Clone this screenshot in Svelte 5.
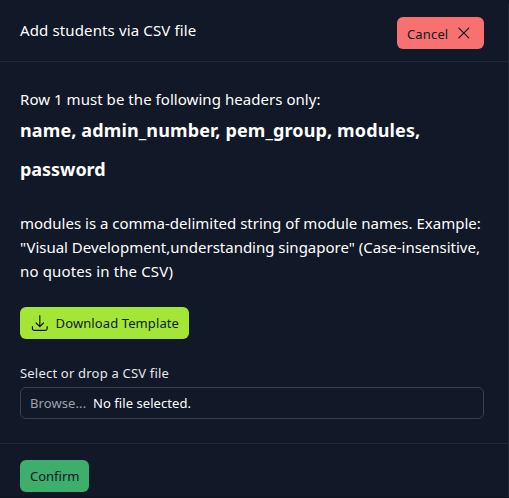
<script>
  const description = [
    'modules is a comma-delimited string of module names. Example:',
    '"Visual Development,understanding singapore" (Case-insensitive,',
    'no quotes in the CSV)'
  ];
</script>

<div class="card">
  <header>
    <h3><span class="t-title">Add students via CSV file</span></h3>
    <button class="btn cancel">
      <span class="t-cancel">Cancel</span>
      <svg viewBox="0 0 24 24" width="20" height="20" fill="none" stroke="currentColor" stroke-width="1.5" stroke-linecap="round" stroke-linejoin="round"><path d="M6 18 18 6M6 6l12 12" /></svg>
    </button>
  </header>
  <main>
    <p class="intro"><span class="t-intro">Row 1 must be the following headers only:</span></p>
    <p class="columns"><span class="t-col1">name, admin_number, pem_group, modules,</span><br /><span class="t-col2">password</span></p>
    <p class="description">
      {#each description as line, i}<span class={`t-desc${i}`}>{line}</span>{/each}
    </p>
    <button class="btn download">
      <svg viewBox="0 0 24 24" width="20" height="20" fill="none" stroke="currentColor" stroke-width="1.5" stroke-linecap="round" stroke-linejoin="round"><path d="M3 16.5v2.25A2.25 2.25 0 0 0 5.25 21h13.5A2.25 2.25 0 0 0 21 18.75V16.5M16.5 12 12 16.5m0 0L7.500 12m4.500 4.500V3" /></svg>
      <span class="t-download">Download Template</span>
    </button>
    <div class="label"><span class="t-label">Select or drop a CSV file</span></div>
    <div class="file"><span class="browse">Browse...</span><span class="empty">No file selected.</span></div>
  </main>
  <footer>
    <button class="btn confirm"><span class="t-confirm">Confirm</span></button>
  </footer>
</div>

<style>
  :global(body) { background: #0d131f; }
  .card {
    box-sizing: border-box;
    width: 509px;
    height: 497px;
    border-right: 1px solid #1f2937;
    border-top-right-radius: 6px;
    background: #111827;
    color: #fff;
    font-family: "Noto Sans", "Open Sans", sans-serif;
    font-size: 15px;
    line-height: 24px;
    white-space: nowrap;
    overflow: hidden;
  }
  h3, p { margin: 0; font-weight: 400; }
  h3 { font-size: 15px; margin-top: 1px; letter-spacing: 0.13px; }
  header {
    box-sizing: border-box;
    height: 62px;
    padding: 17px 24px 0 20px;
    border-bottom: 1px solid #1f2937;
    display: flex;
    justify-content: space-between;
    align-items: flex-start;
  }
  .btn {
    box-sizing: border-box;
    height: 32px;
    display: flex;
    align-items: center;
    border: 0;
    border-radius: 6px;
    padding: 0 10px;
    gap: 6px;
    font: inherit;
    font-size: 13px;
    line-height: 20px;
    color: #111827;
  }
  .cancel { width: 87px; background: #f87171; }
  .t-cancel { letter-spacing: 0.15px; padding-top: 2px; }
  .cancel svg { margin-left: auto; }
  main {
    box-sizing: border-box;
    height: 382px;
    padding: 25px 24px 0 20px;
    border-bottom: 1px solid #1f2937;
  }
  .intro { height: 24px; letter-spacing: 0.05px; }
  .columns { font-weight: 700; font-size: 18px; line-height: 39px; height: 78px; }
  .t-col1 { letter-spacing: 0.13px; }
  .t-col2 { letter-spacing: -0.05px; }
  .description { margin-top: 22px; }
  .description span { display: block; width: max-content; }
  .description .t-desc1 { letter-spacing: -0.01px; }
  .description .t-desc2 { letter-spacing: 0.14px; }
  .download { width: 169px; margin-top: 24px; background: #a3e635; }
  .t-download { letter-spacing: 0.1px; }
  .label { margin-top: 24px; font-size: 13px; line-height: 20px; color: #e5e7eb; letter-spacing: 0.2px; }
  .file {
    box-sizing: border-box;
    width: 464px;
    height: 32px;
    margin-top: 4px;
    border: 1px solid #374151;
    border-radius: 6px;
    padding: 0 9px;
    display: flex;
    align-items: center;
    font-size: 13px;
    line-height: 20px;
  }
  .browse { width: 63px; color: #9ca3af; letter-spacing: 0.1px; }
  .empty { letter-spacing: 0.06px; }
  footer { padding: 16px 20px 0; }
  .confirm { width: 69px; background: #3dae6b; }
</style>
